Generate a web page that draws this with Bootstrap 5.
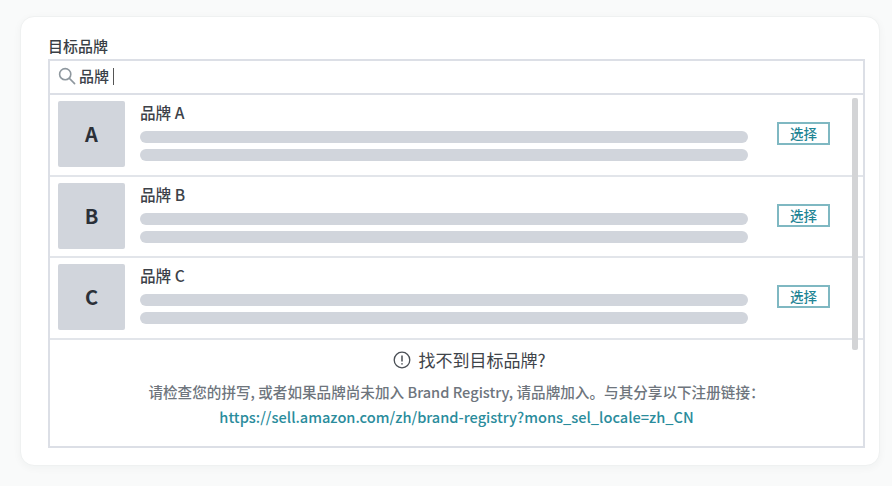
<!DOCTYPE html>
<html lang="zh">
<head>
<meta charset="utf-8">
<title>目标品牌</title>
<link href="https://cdn.jsdelivr.net/npm/bootstrap@5.3.0/dist/css/bootstrap.min.css" rel="stylesheet">
<style>
html,body{height:100%;}
body{background:#f9fafa;font-family:"Noto Sans CJK SC","Noto Sans",sans-serif;color:#3b4149;padding:16px 12px 20px 20px;overflow:hidden;}
.panel{width:860px;height:450px;background:#fff;border:1px solid #eff1f1;border-radius:14px;box-shadow:0 2px 8px rgba(30,50,60,.04);padding:19px 14px 17px 27px;}
.lbl{font-size:15px;line-height:20px;font-weight:500;margin-bottom:3px;color:#3a3f46;}
.box{border:2px solid #dcdfe6;height:389px;position:relative;}
.search{height:32px;border-bottom:2px solid #dcdfe6;padding-left:8px;padding-bottom:2px;gap:3px;font-size:15px;font-weight:500;}
.search{box-sizing:content-box;height:30px;}
.caret-bar{display:inline-block;width:1px;height:17px;background:#555;margin-left:4px;vertical-align:-3px;}
.brand-row{height:81.7px;border-bottom:2px solid #e2e5ea;padding:6px 33px 0 8px;gap:15px;}
.logo{width:67px;height:66px;background:#d1d5dc;border-radius:2px;font-size:20px;font-weight:700;color:#2b3038;flex:none;}
.name{font-size:15.6px;line-height:20px;font-weight:500;margin-bottom:9px;margin-top:1px;color:#3d4249;}
.bar{height:12px;background:#d1d5dc;border-radius:6px;margin-bottom:6px;}
.pick{width:53px;height:23px;border:2px solid #7fb8c2;color:#1f8595;font-size:13.5px;font-weight:500;line-height:17px;text-align:center;flex:none;margin:21px 0 0 14px;padding:0;border-radius:0;background:#fff;}
.thumb{position:absolute;right:5px;top:37px;width:6px;height:252px;background:#d3d4d6;border-radius:2px;}
.foot{padding-top:8px;}
.foot-title{font-size:17px;line-height:24px;color:#3e4349;gap:7px;margin-bottom:10px;padding-left:26px;}
.foot-text{font-size:14.6px;line-height:20px;color:#6e757d;margin-bottom:2px;font-weight:500;}
.foot-link{font-size:14.6px;line-height:20px;color:#2a8c9c;font-weight:500;text-decoration:none;}
</style>
</head>
<body>
<div class="panel">
  <div class="lbl">目标品牌</div>
  <div class="box">
    <div class="search d-flex align-items-center">
      <svg width="18" height="18" viewBox="0 0 18 18" fill="none" stroke="#8e979e" stroke-width="1.6" stroke-linecap="round"><circle cx="7.2" cy="7.2" r="5.6"/><path d="M11.4 11.4 16.6 16.6"/></svg>
      <span>品牌<span class="caret-bar"></span></span>
    </div>
    <div class="brand-row d-flex">
      <div class="logo d-flex align-items-center justify-content-center">A</div>
      <div class="flex-grow-1">
        <div class="name">品牌 A</div>
        <div class="bar"></div><div class="bar"></div>
      </div>
      <button class="pick btn" type="button">选择</button>
    </div>
    <div class="brand-row d-flex">
      <div class="logo d-flex align-items-center justify-content-center">B</div>
      <div class="flex-grow-1">
        <div class="name">品牌 B</div>
        <div class="bar"></div><div class="bar"></div>
      </div>
      <button class="pick btn" type="button">选择</button>
    </div>
    <div class="brand-row d-flex">
      <div class="logo d-flex align-items-center justify-content-center">C</div>
      <div class="flex-grow-1">
        <div class="name">品牌 C</div>
        <div class="bar"></div><div class="bar"></div>
      </div>
      <button class="pick btn" type="button">选择</button>
    </div>
    <div class="thumb"></div>
    <div class="foot text-center">
      <div class="foot-title d-flex align-items-center justify-content-center">
        <svg width="18" height="18" viewBox="0 0 18 18" fill="none" stroke="#4a4f55" stroke-width="1.3"><circle cx="9" cy="9" r="7.8"/><path d="M9 4.6V10.4" stroke-width="1.5"/><path d="M9 12.2V13.6" stroke-width="1.6"/></svg>
        <span>找不到目标品牌?</span>
      </div>
      <div class="foot-text">请检查您的拼写, 或者如果品牌尚未加入 Brand Registry, 请品牌加入。与其分享以下注册链接：</div>
      <a class="foot-link" href="#">https://sell.amazon.com/zh/brand-registry?mons_sel_locale=zh_CN</a>
    </div>
  </div>
</div>
<script src="https://cdn.jsdelivr.net/npm/bootstrap@5.3.0/dist/js/bootstrap.bundle.min.js"></script>
</body>
</html>
